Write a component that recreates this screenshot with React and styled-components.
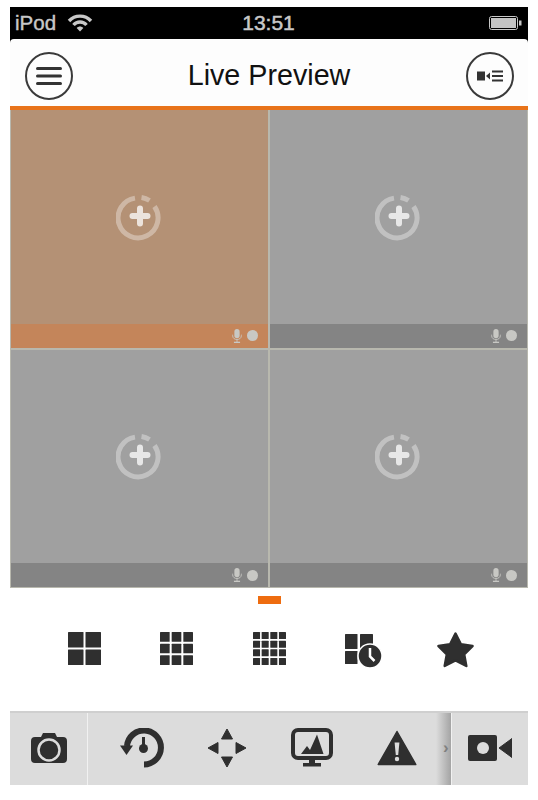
import styled, { createGlobalStyle } from 'styled-components';

const GlobalStyle = createGlobalStyle`
  html, body {
    margin: 0;
    padding: 0;
    background: #fff;
    font-family: "Liberation Sans", Arial, sans-serif;
  }
`;

const Page = styled.div`
  width: 538px;
  height: 800px;
  box-sizing: border-box;
  padding: 7px 10px 0;
  display: flex;
  flex-direction: column;
  overflow: hidden;
`;

const StatusBar = styled.div`
  height: 32px;
  background: #000;
  color: #c8c8c8;
  display: grid;
  grid-template-columns: 1fr auto 1fr;
  align-items: center;
  padding: 0 6px 0 5px;
  font-size: 20.5px;
  -webkit-text-stroke: 0.4px #c8c8c8;
  flex: none;
`;

const StatusLeft = styled.div`
  display: flex;
  align-items: center;
  gap: 11px;
`;

const StatusTime = styled.div`
  font-size: 21px;
  -webkit-text-stroke: 0.5px #c8c8c8;
`;

const StatusRight = styled.div`
  display: flex;
  justify-content: flex-end;
`;

const NavBar = styled.div`
  height: 67px;
  flex: none;
  background: #000;
`;

const NavInner = styled.div`
  height: 100%;
  box-sizing: border-box;
  background: #fdfdfd;
  border-radius: 4px 4px 0 0;
  display: flex;
  align-items: center;
  justify-content: space-between;
  padding: 6px 14px 0 15px;
`;

const NavTitle = styled.div`
  font-size: 28.7px;
  color: #111;
  padding-bottom: 1px;
  margin-left: -1px;
`;

const RoundButton = styled.div`
  width: 48px;
  height: 48px;
  box-sizing: border-box;
  border: 2px solid #3a3a3a;
  border-radius: 50%;
  display: flex;
  align-items: center;
  justify-content: center;
`;

const AccentRule = styled.div`
  height: 4px;
  flex: none;
  background: #e8731a;
`;

const Grid = styled.div`
  height: 477px;
  flex: none;
  display: grid;
  grid-template-columns: 1fr 1fr;
  grid-template-rows: 1fr 1fr;
  gap: 2px;
  background: #b8b8ae;
  border: solid #b8b8ae;
  border-width: 0 1px 1px;
`;

const Cell = styled.div`
  display: flex;
  flex-direction: column;
`;

const Preview = styled.div`
  flex: 1;
  display: flex;
  align-items: center;
  justify-content: center;
  background: ${p => (p.$active ? '#b49175' : '#a0a0a0')};
`;

const CellFooter = styled.div`
  height: 24px;
  flex: none;
  display: flex;
  align-items: center;
  justify-content: flex-end;
  gap: 4px;
  padding-right: 10px;
  background: ${p => (p.$active ? '#c4855a' : '#848484')};
`;

const Dot = styled.div`
  width: 11px;
  height: 11px;
  border-radius: 50%;
  background: #c8c8c4;
`;

const Pager = styled.div`
  height: 16px;
  flex: none;
  padding-top: 8px;
  display: flex;
  justify-content: center;
`;

const PagerMark = styled.div`
  width: 23px;
  height: 8px;
  background: #ee6c0f;
`;

const LayoutRow = styled.div`
  height: 99px;
  flex: none;
  box-sizing: border-box;
  padding: 20px 57px 0 58px;
  display: flex;
  align-items: flex-start;
  justify-content: space-between;
`;

const LayoutIcon = styled.div`
  width: 34px;
  height: 40px;
  display: flex;
  align-items: flex-start;
  justify-content: flex-start;
`;

const Toolbar = styled.div`
  height: 74px;
  flex: none;
  display: flex;
  background: #dcdcdc;
  border-top: 2px solid #cfcfcf;
  box-sizing: border-box;
`;

const ToolSlot = styled.div`
  width: ${p => p.$width}px;
  flex: none;
  display: flex;
  align-items: center;
  justify-content: center;
  padding-bottom: 2px;
`;

const ToolDivider = styled.div`
  width: 1px;
  flex: none;
  background: #f1f1f1;
`;

const ToolScroll = styled.div`
  flex: 1;
  display: flex;
  align-items: center;
  padding: 0 0 2px 11px;
  background: linear-gradient(to right, #dcdcdc 0, #dcdcdc 348px, #a4a4a4 100%);
`;

const ScrollItem = styled.div`
  width: 85px;
  flex: none;
  display: flex;
  align-items: center;
  justify-content: center;
`;

const Chevron = styled.div`
  color: #808080;
  font-size: 17px;
  font-weight: 700;
  margin-left: 4px;
`;

const WifiIcon = () => (
  <svg width="26" height="20" viewBox="0 0 26 20" fill="none" stroke="#c8c8c8" strokeWidth="3.4">
    <path d="M2 8 C8 1.5 18 1.5 24 8" />
    <path d="M6.5 12 C10 8 16 8 19.5 12" />
    <path d="M13 18.5 l-3.3 -3.5 C11.5 13 14.500 13 16.300 15 Z" fill="#c8c8c8" stroke="none" />
  </svg>
);

const BatteryIcon = () => (
  <svg width="33" height="14" viewBox="0 0 33 14">
    <rect x="0.5" y="0.500" width="28" height="13" rx="2" fill="none" stroke="#c8c8c8" />
    <rect x="2" y="2" width="25" height="10" fill="#c4c4c4" />
    <rect x="30" y="4.500" width="2.500" height="5" fill="#c8c8c8" />
  </svg>
);

const MenuIcon = () => (
  <svg width="26" height="20" viewBox="0 0 26 20" fill="#333">
    <rect x="0" y="1" width="26" height="3" rx="1.500" />
    <rect x="0" y="8.500" width="26" height="3" rx="1.500" />
    <rect x="0" y="16" width="26" height="3" rx="1.500" />
  </svg>
);

const CameraListIcon = () => (
  <svg width="26" height="14" viewBox="0 0 26 14" fill="#333">
    <rect x="0" y="2.500" width="8" height="9" />
    <path d="M9 7 L13 3.500 V10.500 Z" />
    <rect x="15" y="1.500" width="11" height="2" />
    <rect x="15" y="6" width="11" height="2" />
    <rect x="15" y="10.500" width="11" height="2" />
  </svg>
);

const AddIcon = () => (
  <svg width="48" height="48" viewBox="0 0 48 48" fill="none">
    <path d="M38.500 13.500 A20 20 0 1 1 19 5.100" stroke="#fff" strokeOpacity="0.35" strokeWidth="5" />
    <path d="M25.500 4.500 A20 20 0 0 1 33.500 7.500" stroke="#fff" strokeOpacity="0.35" strokeWidth="5" />
    <path d="M24 15.500 V30.500 M16.500 23 H31.500" stroke="#fff" strokeOpacity="0.75" strokeWidth="6" strokeLinecap="round" />
  </svg>
);

const MicIcon = () => (
  <svg width="12" height="14" viewBox="0 0 12 16" fill="#c8c8c4">
    <rect x="3" y="0" width="6" height="10.500" rx="3" />
    <path d="M1 6.500 V7.500 C1 10.500 3.200 12 6 12 C8.800 12 11 10.500 11 7.500 V6.500" fill="none" stroke="#c8c8c4" />
    <rect x="5.500" y="12" width="1" height="3" />
    <rect x="2.500" y="14.500" width="7" height="1.500" />
  </svg>
);

const TileIcon = ({ n }) => {
  const gap = n === 4 ? 1.600 : 2;
  const size = (33 - gap * (n - 1)) / n;
  const tiles = [];
  for (let r = 0; r < n; r++) {
    for (let c = 0; c < n; c++) {
      tiles.push(<rect key={`${r}-${c}`} x={c * (size + gap)} y={r * (size + gap)} width={size} height={size} rx="0.5" />);
    }
  }
  return (
    <svg width="33" height="33" viewBox="0 0 33 33" fill="#2f2f2f">
      {tiles}
    </svg>
  );
};

const ScheduleIcon = () => (
  <svg width="37" height="36" viewBox="0 0 37 36" style={{ flex: 'none' }}>
    <g fill="#2f2f2f">
      <rect x="0" y="2" width="12.500" height="15" rx="0.5" />
      <rect x="15" y="2" width="13" height="15" rx="0.5" />
      <rect x="0" y="19" width="12.500" height="13" rx="0.5" />
    </g>
    <circle cx="25" cy="24" r="12" fill="#2f2f2f" stroke="#fff" strokeWidth="1.500" />
    <path d="M25 16 V24.500 L29.500 29" fill="none" stroke="#fff" strokeWidth="2.500" />
  </svg>
);

const StarIcon = () => (
  <svg width="37" height="36" viewBox="0 0 37 36" style={{ flex: 'none' }}>
    <path
      d="M18.500 1.500 L23.900 12.300 L35.500 14 L27.200 22.400 L29.300 34 L18.500 28.400 L7.700 34 L9.800 22.400 L1.500 14 L13.100 12.300 Z"
      fill="#2f2f2f"
      stroke="#2f2f2f"
      strokeWidth="2.500"
      strokeLinejoin="round"
    />
  </svg>
);

const SnapshotIcon = () => (
  <svg width="36" height="32" viewBox="0 0 36 32">
    <path
      d="M4 5 H10 L12 1 H24 L26 5 H32 Q36 5 36 9 V27 Q36 31 32 31 H4 Q0 31 0 27 V9 Q0 5 4 5 Z"
      fill="#2f2f2f"
    />
    <circle cx="18" cy="18" r="10.500" fill="none" stroke="#dcdcdc" strokeWidth="2.500" />
  </svg>
);

const PlaybackIcon = () => (
  <svg width="44" height="40" viewBox="0 0 44 40">
    <path d="M7 18 A17 17 0 1 1 24 36.500" fill="none" stroke="#2f2f2f" strokeWidth="6" />
    <path d="M0 17.500 H13 L6.500 27 Z" fill="#2f2f2f" strokeLinejoin="round" />
    <circle cx="23.500" cy="20.500" r="4.500" fill="#2f2f2f" />
    <rect x="22" y="9" width="3" height="10" fill="#2f2f2f" />
  </svg>
);

const MoveIcon = () => (
  <svg width="40" height="40" viewBox="0 0 40 40" fill="#2f2f2f" stroke="#2f2f2f" strokeWidth="1" strokeLinejoin="round">
    <path d="M20 1 L25.500 11 H14.500 Z" />
    <path d="M20 39 L14.500 29 H25.500 Z" />
    <path d="M1 20 L11 14.500 V25.500 Z" />
    <path d="M39 20 L29 25.500 V14.500 Z" />
  </svg>
);

const MonitorIcon = () => (
  <svg width="42" height="40" viewBox="0 0 42 40">
    <rect x="2" y="2" width="38" height="28" rx="5" fill="none" stroke="#2f2f2f" strokeWidth="4" />
    <path d="M10 26 L16 18 L19 22 L26 6.500 L32.500 26 Z" fill="#2f2f2f" />
    <rect x="18" y="31" width="6" height="5" fill="#2f2f2f" />
    <rect x="12" y="35" width="18" height="3.500" fill="#2f2f2f" />
  </svg>
);

const AlertIcon = () => (
  <svg width="40" height="36" viewBox="0 0 40 36">
    <path d="M20 1.500 L38.800 34.500 H1.200 Z" fill="#2f2f2f" stroke="#2f2f2f" strokeWidth="1.500" strokeLinejoin="round" />
    <path d="M17.600 12.500 H22.400 L21.200 25 H18.800 Z" fill="#dcdcdc" />
    <circle cx="20" cy="29" r="2.200" fill="#dcdcdc" />
  </svg>
);

const RecordIcon = () => (
  <svg width="44" height="26" viewBox="0 0 44 26">
    <rect x="0" y="0" width="29" height="26" rx="2" fill="#2f2f2f" />
    <circle cx="15" cy="13" r="6" fill="#dcdcdc" />
    <path d="M31 13 L44 3.500 V22.500 Z" fill="#2f2f2f" stroke="#2f2f2f" strokeWidth="1" strokeLinejoin="round" />
  </svg>
);

const cells = [true, false, false, false];

const App = () => {
  return (
    <Page>
      <GlobalStyle />
      <StatusBar>
        <StatusLeft>
          iPod
          <WifiIcon />
        </StatusLeft>
        <StatusTime>13:51</StatusTime>
        <StatusRight>
          <BatteryIcon />
        </StatusRight>
      </StatusBar>
      <NavBar>
        <NavInner>
          <RoundButton>
            <MenuIcon />
          </RoundButton>
          <NavTitle>Live Preview</NavTitle>
          <RoundButton>
            <CameraListIcon />
          </RoundButton>
        </NavInner>
      </NavBar>
      <AccentRule />
      <Grid>
        {cells.map((active, i) => (
          <Cell key={i}>
            <Preview $active={active}>
              <AddIcon />
            </Preview>
            <CellFooter $active={active}>
              <MicIcon />
              <Dot />
            </CellFooter>
          </Cell>
        ))}
      </Grid>
      <Pager>
        <PagerMark />
      </Pager>
      <LayoutRow>
        <LayoutIcon><TileIcon n={2} /></LayoutIcon>
        <LayoutIcon><TileIcon n={3} /></LayoutIcon>
        <LayoutIcon><TileIcon n={4} /></LayoutIcon>
        <LayoutIcon><ScheduleIcon /></LayoutIcon>
        <LayoutIcon><StarIcon /></LayoutIcon>
      </LayoutRow>
      <Toolbar>
        <ToolSlot $width={77}>
          <SnapshotIcon />
        </ToolSlot>
        <ToolDivider />
        <ToolScroll>
          <ScrollItem><PlaybackIcon /></ScrollItem>
          <ScrollItem><MoveIcon /></ScrollItem>
          <ScrollItem><MonitorIcon /></ScrollItem>
          <ScrollItem><AlertIcon /></ScrollItem>
          <Chevron>›</Chevron>
        </ToolScroll>
        <ToolDivider />
        <ToolSlot $width={76}>
          <RecordIcon />
        </ToolSlot>
      </Toolbar>
    </Page>
  );
};

export default App;
